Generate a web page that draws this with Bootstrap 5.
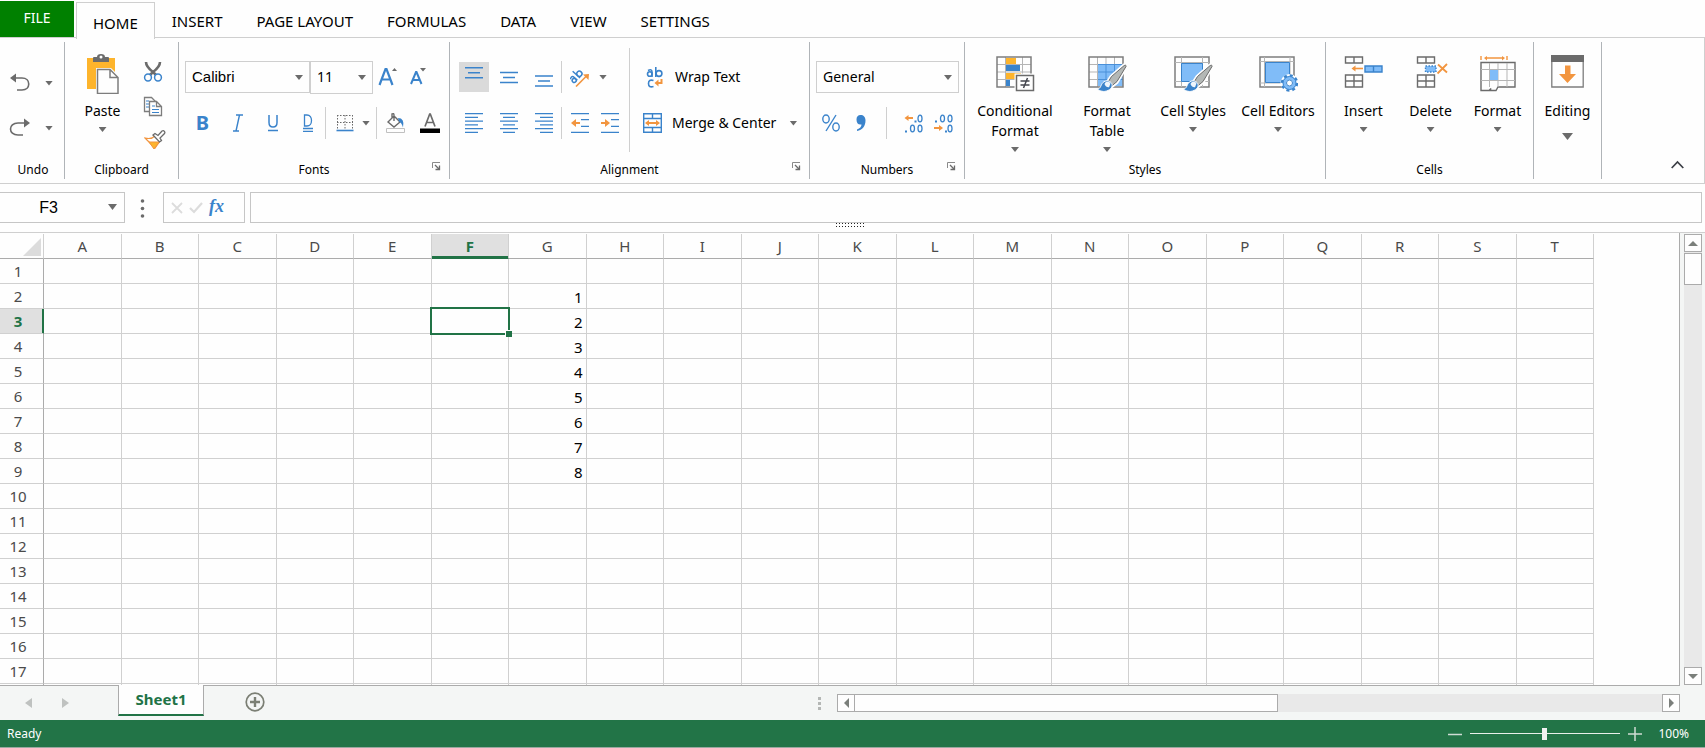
<!DOCTYPE html>
<html lang="en">
<head>
<meta charset="utf-8">
<meta name="viewport" content="width=device-width, initial-scale=1">
<title>Spreadsheet</title>
<link rel="stylesheet" href="https://cdn.jsdelivr.net/npm/bootstrap@5.3.0/dist/css/bootstrap.min.css">
<style>
:root{--ink:#6b6b6b;--blue:#3a83cb;--orange:#f2953f;--green:#217346;--line:#cfcfcf;--rule:#ababab}
body{font-family:"Noto Sans","Open Sans",sans-serif;font-size:14px;line-height:20px;color:#000;background:#fefefe}
button{background:none;border:0;padding:0;color:inherit}
svg{display:block;flex:none}
.caret{width:8px;height:5px;background:var(--ink);clip-path:polygon(0 0,100% 0,50% 100%)}

.tabs{height:38px;padding-top:1px;border-bottom:1px solid var(--line)}
.tabs .nav-link{padding:10px 17px 6px;color:#000;border:0;font-size:15px;white-space:nowrap}
.tabs .file-tab{width:74px;height:36px;padding:7px 0;margin-right:2px;background:#008000;color:#fff;font-size:14px;text-align:center}
.tabs .nav-link.active{height:37px;margin-bottom:-1px;padding:10px 16px 6px;margin-top:1px;border:1px solid var(--line);border-bottom:0;background:#fefefe}

.ribbon{display:grid;grid-template-columns:65px 114px 271px 360px 155px 361px 208px 68px 1fr;height:146px;padding:4px 0;border:1px solid var(--line);border-width:0 1px 1px 0}
.rgroup{display:grid;grid-template-rows:117px 20px;border-right:1px solid #b0b4b8;position:relative}
.rgroup footer{font-size:12px;text-align:center;line-height:22px}
.launcher{position:absolute;right:8px;bottom:8px}
.two-rows{display:grid;grid-template-rows:32px 32px;row-gap:14px;padding-top:19px;align-content:start}
.two-rows>div{display:flex;align-items:center}
.indent{padding-left:6px}
.tool{width:30px;height:30px;display:flex;align-items:center;justify-content:center;flex:none;white-space:nowrap}
.tool.on{background:#dadada}
.tool.letter{width:35px;color:var(--blue);font-size:20px;line-height:24px}
.drop{width:12px;height:30px;display:flex;align-items:center;justify-content:center;flex:none}
.vsep{width:1px;height:32px;background:var(--line);flex:none}
.vsep.tall{height:104px;margin-top:6px}
.number-sep{margin:0 11px 0 10px}
.align-tools{width:179px;padding-left:9px}
.align-tools .tool{margin-right:5px}
.align-tools .vsep{margin:0 3px 0 -3px}
.align-tools .vsep+.tool{margin-right:0}
.align-tools .drop{margin-left:2px}
.history{padding:26px 0 0 8px;display:grid;grid-template-columns:24px 34px;grid-auto-rows:30px;row-gap:15px;align-content:start}
.history button{display:flex;align-items:center;justify-content:center}
.big{display:flex;flex-direction:column;align-items:center;padding-top:12px;line-height:20px}
.big svg{height:40px;margin-bottom:7px}
.big .caret{margin-top:6px}
.big .editing-caret{width:11px;height:7px;margin-top:12px}
.clip{display:grid;grid-template-columns:75px 24px}
.clip .small-tools{display:grid;grid-auto-rows:26px;row-gap:8px;padding-top:17px;align-content:start}
.small-tools button{display:flex;align-items:center;justify-content:center}
.combo.form-select{height:32px;border:1px solid var(--line);border-radius:0;padding:0 20px 0 6px;font-size:14px;line-height:20px;color:#000;background-color:#fefefe;background-position:right 6px center;background-size:8px 5px;
--bs-form-select-bg-img:url("data:image/svg+xml,%3csvg xmlns='http://www.w3.org/2000/svg' viewBox='0 0 8 5'%3e%3cpath fill='%236b6b6b' d='M0 0h8L4 5z'/%3e%3c/svg%3e")}
.combo.font-name{width:125px;font-family:"Liberation Sans",sans-serif;font-size:15px}
.combo.font-size{width:63px;height:33px}
.combo.number-format{width:143px}
.wide-tool{display:flex;align-items:center;height:30px;white-space:nowrap}
.merge-caret{margin-left:13px}
.styles-row{display:grid;grid-template-columns:100px 84px 88px 82px}
.cells-row{display:grid;grid-template-columns:repeat(3,67px);padding-left:4px}

.fbar{height:49px;padding:8px 3px 10px 0;border-bottom:1px solid var(--line);position:relative}
.fbar .box{height:31px;border:1px solid #c6c6c6;border-radius:0;background:#fefefe}
.name-wrap{position:relative}
.name-wrap button{position:absolute;right:8px;top:12px}
.name-wrap .caret{width:9px;height:6px}
.fbar .name-box{width:125px;border-left:0;padding:0 27px 0 0;text-align:center;font-family:"Liberation Sans",sans-serif;font-size:16px}
.dots{margin:0 18px 0 15px}
.fx-box{width:82px;margin-right:5px;padding-left:7px;gap:6px}
.fx{font:italic 700 18px/20px "Liberation Serif",serif;color:var(--blue);padding-bottom:4px}
.grip{position:absolute;bottom:5px;left:49%;width:30px;height:5px;background:radial-gradient(circle,#222 1px,transparent 1px) 0 0/3px 3px}

.workarea{flex:1 1 0;min-height:0}
.pane{border-right:1px solid var(--rule);border-bottom:1px solid var(--rule);padding:1px 85px 0 0}
.sheet{width:100%;table-layout:fixed;border-collapse:separate;border-spacing:0;font-size:15px;line-height:20px}
.sheet th,.sheet td{height:25px;padding:0;border:solid #d0d0d0;border-width:0 1px 1px 0;position:relative}
.sheet th{font-weight:400;color:#4a4a4a;text-align:center;font-size:15px}
.sheet col.heads{width:44px}
.sheet thead th{border-bottom-color:var(--rule)}
.sheet tbody th{border-right-color:var(--rule);padding-right:7px}
.sheet .hot{background:#e0e0e0;color:var(--green);font-weight:700}
.sheet thead .hot{box-shadow:inset 0 -2px var(--green);border-bottom-color:var(--green)}
.sheet tbody .hot{box-shadow:inset -1px 0 var(--green);border-right-color:var(--green)}
.sheet td{text-align:right;padding:2px 3px 0 0}
.corner{position:absolute;right:2px;bottom:2px;width:18px;height:18px;background:#dcdcdc;clip-path:polygon(100% 0,100% 100%,0 100%)}
.cursor{position:absolute;inset:-2px;border:2px solid var(--green);z-index:1}
.cursor::after{content:"";position:absolute;right:-4px;bottom:-4px;width:7px;height:7px;background:var(--green);border:solid #fefefe;border-width:1px 0 0 1px}

.sb-btn{width:18px;height:18px;border:1px solid var(--rule);background:#fefefe;display:flex;align-items:center;justify-content:center;flex:none}
.thumb{border:1px solid var(--rule);background:#fefefe}
.vscroll{width:25px;padding:1px 3px 1px 4px;background:#f4f6f5}
.vscroll .track{background:#e9e9e9;padding-top:1px}
.vscroll .thumb{height:32px}
.bottom{height:34px;background:#f4f6f5}
.hscroll{width:843px;margin:8px 25px 0 0}
.hscroll .track{background:#e9e9e9;height:18px}
.hscroll .thumb{height:18px;width:calc(52% + 4px);margin-left:-1px}
.hdots{padding:11px 16px 0 0}
.sheet-nav{width:118px;padding-left:25px}
.sheet-nav button{width:37px;height:34px;display:flex;align-items:center}
.sheet-tab{position:relative;width:86px;height:31px;margin-top:-1px;border:1px solid var(--rule);border-top:0;border-bottom:2px solid var(--green);background:#fefefe;color:var(--green);font-weight:700;font-size:15px;text-align:center;text-decoration:none;line-height:28px}
.add-sheet{margin:6px 0 0 41px}
.status{height:28px;background:#227447;color:#fff;font-size:12px;border-bottom:1px solid #9aa8a0}
.status>span:first-child{padding-left:7px}
.zoom{appearance:none;width:150px;height:14px;background:linear-gradient(#e8f0eb,#e8f0eb) center/100% 1px no-repeat;margin:0 8px}
.zoom::-webkit-slider-thumb{appearance:none;width:5px;height:12px;background:#f0f2f1}
</style>
</head>
<body>
<div class="d-flex flex-column vh-100 overflow-hidden">

<nav class="tabs d-flex flex-shrink-0" aria-label="Ribbon">
  <a class="nav-link file-tab" href="#">FILE</a>
  <a class="nav-link active" href="#">HOME</a>
  <a class="nav-link" href="#">INSERT</a>
  <a class="nav-link" href="#">PAGE LAYOUT</a>
  <a class="nav-link" href="#">FORMULAS</a>
  <a class="nav-link" href="#">DATA</a>
  <a class="nav-link" href="#">VIEW</a>
  <a class="nav-link" href="#">SETTINGS</a>
</nav>

<!-- shared icon parts -->
<svg width="0" height="0" class="position-absolute" aria-hidden="true">
  <defs>
    <g id="launch" fill="none" stroke="#8a8a8a"><path d="M.5 6V.5H8"/><path d="M3 3l4 4M7.500 3.500v4h-4" stroke="#6b6b6b" stroke-width="1.300"/></g>
    <g id="brush"><path d="M38.500 12.500c.5-1.500-1-2.500-2.500-1.500L23 22.500 18 30l4 4 7-5.500z" fill="#b4b8b6" stroke="#fefefe" stroke-width="3"/><path d="M38 12.500c.5-1.500-1-1.500-2-.8L23.500 22.500 19.500 29l3.500 3.500 6-5z" fill="#b4b8b6" stroke="#6b6b6b"/><path d="M9 35c4 0 3.500-4 6-6.500 2.500-2.500 6-2 8 0s1.500 6-3 8-8 .5-11-1.500z" fill="#3a83cb" stroke="#fefefe"/><path d="M16.500 30c1-3 4.500-2.500 6-.8l-1.500 4c-2 .3-3.500-.8-4.500-3.200z" fill="#eef5fc"/></g>
  </defs>
</svg>

<main class="ribbon flex-shrink-0">
  <section class="rgroup">
    <div class="history">
      <button aria-label="Undo"><svg width="22" height="20" viewBox="0 0 22 20" fill="none" stroke="#6b6b6b" stroke-width="1.600"><path d="M5 5h8c9 0 9 12 0 12H8"/><path d="M7 .5v9L1 5z" fill="#6b6b6b" stroke="none"/></svg></button>
      <button aria-label="Undo list"><span class="caret"></span></button>
      <button aria-label="Redo"><svg width="22" height="20" viewBox="0 0 22 20" fill="none" stroke="#6b6b6b" stroke-width="1.600"><path d="M17 5H9C-1 5-1 17 9 17h5"/><path d="M15 .5v9L21 5z" fill="#6b6b6b" stroke="none"/></svg></button>
      <button aria-label="Redo list"><span class="caret"></span></button>
    </div>
    <footer>Undo</footer>
  </section>

  <section class="rgroup">
    <div class="clip">
      <button class="big">
        <svg width="32" height="40" viewBox="0 0 32 40"><path d="M0 4h28v31H0z" fill="#fdb42c"/><path d="M6 8V4q0-1 1-1h3q0-3 4-3t4 3h3q1 0 1 1v4z" fill="#6b6b6b"/><circle cx="14" cy="3" r="1.500" fill="#fefefe"/><path d="M9 14h15l8 8v18H9z" fill="#fefefe"/><path d="M10.500 15.500H23l8 8v16H10.500zM23 15.500v8h8" fill="#fefefe" stroke="#7d7d7d" stroke-width="1.500"/></svg>
        Paste<span class="caret"></span>
      </button>
      <div class="small-tools">
        <button aria-label="Cut"><svg width="20" height="20" viewBox="0 0 20 20"><path d="M3 0c0 4 3 7 7 10l3 3M17 0c0 4-3 7-7 10l-3 3" fill="none" stroke="#6b6b6b" stroke-width="2.600"/><circle cx="5" cy="15.500" r="3.400" fill="#fefefe" stroke="#3a83cb" stroke-width="1.500"/><circle cx="15" cy="15.500" r="3.400" fill="#fefefe" stroke="#3a83cb" stroke-width="1.500"/></svg></button>
        <button aria-label="Copy"><svg width="20" height="21" viewBox="0 0 20 21" fill="#fefefe" stroke="#7d7d7d"><path d="M1.500 1.500h7l4 4v10h-11z" stroke-width="1.300"/><path d="M3 5h3M3 8h3M3 11h3" stroke="#3a83cb"/><path d="M6.500 5.500h7l5 5v9h-12zM13.500 5.500v5h5" stroke-width="1.300"/><path d="M9 13.500h7M9 16.500h7M9 10h3" stroke="#3a83cb"/></svg></button>
        <button aria-label="Format painter" class="ps-1"><svg width="22" height="20" viewBox="0 0 22 20"><path d="M1 8l10 10 5-7-5-5c-3 3-6 3-10 2z" fill="#fefefe" stroke="#f2953f" stroke-width="1.200"/><path d="M5 12h10l-5 7z" fill="#fdb42c" stroke="#f2953f"/><path d="M9 5l2-1.500 3 2 4-4.500c2-1 3.500 1 2.500 2.500L16 8l1.500 2.500-2 1.500z" fill="#fefefe" stroke="#6b6b6b" stroke-width="1.300"/></svg></button>
      </div>
    </div>
    <footer>Clipboard</footer>
  </section>

  <section class="rgroup">
    <div class="two-rows indent">
      <div>
        <select class="form-select combo font-name" aria-label="Font"><option>Calibri</option></select>
        <select class="form-select combo font-size" aria-label="Font size"><option>11</option></select>
        <button class="tool" aria-label="Grow font"><svg width="20" height="20" viewBox="0 0 20 20"><path d="M1.500 18L7.500 2h1l6 16M4 12.500h8" fill="none" stroke="#3a83cb" stroke-width="2.200"/><path d="M14 4h5l-2.500-3z" fill="#6b6b6b"/></svg></button>
        <button class="tool" aria-label="Shrink font"><svg width="18" height="20" viewBox="0 0 18 20"><path d="M2 17L7 5h.5l5 12M4 13h6.500" fill="none" stroke="#3a83cb" stroke-width="2"/><path d="M11 1h6l-3 3.500z" fill="#6b6b6b"/></svg></button>
      </div>
      <div>
        <button class="tool letter fw-bold" aria-label="Bold">B</button>
        <button class="tool letter" aria-label="Italic"><svg width="12" height="18" viewBox="0 0 12 18"><path d="M4 1h7M1 17h6M7.500 1l-3.500 16" fill="none" stroke="#3a83cb" stroke-width="1.400"/></svg></button>
        <button class="tool letter" aria-label="Underline"><svg width="12" height="18" viewBox="0 0 12 18"><path d="M2 1v7.500c0 6 8 6 8 0V1M1 16.500h10" fill="none" stroke="#3a83cb" stroke-width="1.500"/></svg></button>
        <button class="tool letter" aria-label="Double underline"><svg width="12" height="18" viewBox="0 0 12 18"><path d="M2.500 1v11H5c6 0 6-11 0-11zM1 14.500h10M1 17.300h10" fill="none" stroke="#3a83cb" stroke-width="1.300"/></svg></button>
        <span class="vsep"></span>
        <button class="tool ms-1" aria-label="Borders"><svg width="18" height="18" viewBox="0 0 18 18" fill="none" stroke="#6b6b6b"><path d="M1 1.500h16M1 8.500h16M1.500 1v14M9 1v14M16.500 1v14" stroke-dasharray="1.500 1.500"/><path d="M.5 16.500h17" stroke="#3a83cb" stroke-width="1.600"/></svg></button>
        <button class="drop" aria-label="Border styles"><span class="caret"></span></button>
        <span class="vsep ms-1"></span>
        <button class="tool ms-1" aria-label="Fill colour"><svg width="22" height="20" viewBox="0 0 22 20"><path d="M3 9l6-6 6 6-6 5zM9 8V2q0-2-2-1v5" fill="#fefefe" stroke="#6b6b6b" stroke-width="1.400"/><path d="M13 5q7 0 5 9.500-1.500-5-4-6z" fill="#3a83cb"/><path d="M1.500 15.500h18v4h-18z" fill="#fefefe" stroke="#c0c0c0"/></svg></button>
        <button class="tool ms-1" aria-label="Font colour"><svg width="20" height="20" viewBox="0 0 20 20"><path d="M5 13.500L9.700 1h.6L15 13.500M6.500 9.500h7" fill="none" stroke="#6b6b6b" stroke-width="1.700"/><path d="M0 15.500h20V20H0z"/></svg></button>
      </div>
    </div>
    <footer>Fonts</footer>
    <button class="launcher" aria-label="Font settings"><svg width="9" height="9"><use href="#launch"/></svg></button>
  </section>

  <section class="rgroup">
    <div class="d-flex">
      <div class="two-rows align-tools">
        <div>
          <button class="tool on" aria-label="Top align"><svg width="18" height="20" viewBox="0 0 18 20" stroke="#3a83cb" stroke-width="1.400"><path d="M0 .8h18M3 5.800h12M0 10.800h18"/></svg></button>
          <button class="tool" aria-label="Middle align"><svg width="18" height="20" viewBox="0 0 18 20" stroke="#3a83cb" stroke-width="1.400"><path d="M0 5.500h18M3 10.500h12M0 15.500h18"/></svg></button>
          <button class="tool" aria-label="Bottom align"><svg width="18" height="20" viewBox="0 0 18 20" stroke="#3a83cb" stroke-width="1.400"><path d="M0 9h18M3 14h12M0 19h18"/></svg></button>
          <span class="vsep"></span>
          <button class="tool" aria-label="Orientation"><svg width="20" height="20" viewBox="0 0 20 20"><g fill="none" stroke="#3a83cb" stroke-width="1.500" transform="rotate(-48 6 14)"><path d="M3.500 8.500q4-1.500 4 1.500v4.500"/><circle cx="5.200" cy="12.300" r="2"/><path d="M11 5v10"/><circle cx="13.600" cy="11.700" r="2.600"/></g><path d="M6 19.500L16.500 9" stroke="#f2953f" stroke-width="1.600"/><path d="M13 7.500l6-.5-.5 6z" fill="#f2953f"/></svg></button>
          <button class="drop" aria-label="Orientation list"><span class="caret"></span></button>
        </div>
        <div>
          <button class="tool" aria-label="Align left"><svg width="18" height="20" viewBox="0 0 18 20" stroke="#3a83cb" stroke-width="1.300"><path d="M0 .7h18M0 4.400h13M0 8.100h18M0 11.900h13M0 15.600h18M0 19.300h13"/></svg></button>
          <button class="tool" aria-label="Align centre"><svg width="18" height="20" viewBox="0 0 18 20" stroke="#3a83cb" stroke-width="1.300"><path d="M0 .7h18M3 4.400h12M0 8.100h18M3 11.900h12M0 15.600h18M3 19.300h12"/></svg></button>
          <button class="tool" aria-label="Align right"><svg width="18" height="20" viewBox="0 0 18 20" stroke="#3a83cb" stroke-width="1.300"><path d="M0 .7h18M5 4.400h13M0 8.100h18M5 11.900h13M0 15.600h18M5 19.300h13"/></svg></button>
          <span class="vsep"></span>
          <button class="tool" aria-label="Decrease indent"><svg width="18" height="20" viewBox="0 0 18 20" stroke="#3a83cb" stroke-width="1.300"><path d="M0 .7h18M10 6.700h8M10 13.300h8M0 19.300h18"/><path d="M3 10h6" stroke="#f2953f" stroke-width="2"/><path d="M5 6v8l-5-4z" fill="#f2953f" stroke="none"/></svg></button>
          <button class="tool" aria-label="Increase indent"><svg width="18" height="20" viewBox="0 0 18 20" stroke="#3a83cb" stroke-width="1.300"><path d="M0 .7h18M10 6.700h8M10 13.300h8M0 19.300h18"/><path d="M0 10h6" stroke="#f2953f" stroke-width="2"/><path d="M4 6v8l5-4z" fill="#f2953f" stroke="none"/></svg></button>
        </div>
      </div>
      <span class="vsep tall"></span>
      <div class="two-rows ms-2 ps-1">
        <div>
          <button class="wide-tool gap-2"><svg width="25" height="22" viewBox="-2 0 25 22"><g fill="none" stroke="#3a83cb" stroke-width="1.600"><path d="M4 4.500q4-2 4 1.500v5"/><circle cx="5.800" cy="8" r="2.300"/><path d="M11.800 1v10"/><circle cx="15" cy="7.500" r="2.900"/><path d="M9.500 14.500q-5-1.500-5 3t5 3"/></g><path d="M17.500 13v4H14" fill="none" stroke="#f2953f" stroke-width="2"/><path d="M14.500 13.500v7l-4-3.500z" fill="#f2953f"/></svg>Wrap Text</button>
        </div>
        <div>
          <button class="wide-tool"><svg class="me-1" width="26" height="20" viewBox="0 0 26 20"><path d="M1.700.7h17.600v18.600H1.700zM1.700 5.500h17.600M1.700 14.500h17.600M10.500.7v4.800M10.500 14.500v4.800" fill="#fefefe" stroke="#3a83cb" stroke-width="1.400"/><path d="M5 10h11" stroke="#f2953f" stroke-width="2"/><path d="M7 7v6l-4-3zM14 7v6l4-3z" fill="#f2953f"/></svg>Merge &amp; Center<span class="caret merge-caret"></span></button>
        </div>
      </div>
    </div>
    <footer>Alignment</footer>
    <button class="launcher" aria-label="Alignment settings"><svg width="9" height="9"><use href="#launch"/></svg></button>
  </section>

  <section class="rgroup">
    <div class="two-rows indent">
      <div><select class="form-select combo number-format" aria-label="Number format"><option>General</option></select></div>
      <div>
        <button class="tool" aria-label="Percent"><svg width="18" height="18" viewBox="0 0 18 18" fill="none" stroke="#3a83cb" stroke-width="1.400"><ellipse cx="4" cy="5" rx="3.200" ry="4"/><ellipse cx="14" cy="13" rx="3.200" ry="4"/><path d="M14 1L4 17"/></svg></button>
        <button class="tool" aria-label="Thousands separator"><svg width="10" height="18" viewBox="0 0 10 18"><path d="M4.500 1c3 0 5 2 5 5.500 0 5.500-3 9.500-8.500 10.500v-1.500c3-1 4.500-3 4.500-5C2 11 .5 9 .5 5.500.5 2.500 2 1 4.500 1z" fill="#3a83cb"/></svg></button>
        <span class="vsep number-sep"></span>
        <button class="tool" aria-label="Increase decimal"><svg width="19" height="19" viewBox="0 0 19 19" fill="none" stroke="#3a83cb" stroke-width="1.300"><ellipse cx="16" cy="4.500" rx="2" ry="3.300"/><ellipse cx="8.500" cy="14.500" rx="2" ry="3.300"/><ellipse cx="16" cy="14.500" rx="2" ry="3.300"/><path d="M10.500 7.500h2M1 17.500h2" stroke-width="2"/><path d="M3 4h6" stroke="#f2953f" stroke-width="2"/><path d="M4.500 1v6L.5 4z" fill="#f2953f" stroke="none"/></svg></button>
        <button class="tool" aria-label="Decrease decimal"><svg width="19" height="19" viewBox="0 0 19 19" fill="none" stroke="#3a83cb" stroke-width="1.300"><ellipse cx="8.500" cy="4.500" rx="2" ry="3.300"/><ellipse cx="16" cy="4.500" rx="2" ry="3.300"/><ellipse cx="16" cy="14.500" rx="2" ry="3.300"/><path d="M11 17.500h2M1 7.500h2" stroke-width="2"/><path d="M0 14h6" stroke="#f2953f" stroke-width="2"/><path d="M5 11v6l4-3z" fill="#f2953f" stroke="none"/></svg></button>
      </div>
    </div>
    <footer>Numbers</footer>
    <button class="launcher" aria-label="Number settings"><svg width="9" height="9"><use href="#launch"/></svg></button>
  </section>

  <section class="rgroup">
    <div class="styles-row">
      <button class="big"><svg width="39" height="40" viewBox="0 0 39 40"><path d="M1 3h34v30H1z" fill="#fefefe"/><path d="M9.500 3v30M26.500 3v30M1 10.500h34M1 18h34M1 25.500h34" stroke="#b5b5b5"/><path d="M10 4h10v6H10zM10 19h15v6H10z" fill="#fdb42c"/><path d="M10 11h14v6H10zM10 26h4v6h-4z" fill="#3a83cb"/><path d="M1 3h34v30H1z" fill="none" stroke="#7d7d7d" stroke-width="1.500"/><path d="M18.500 19.500H40v18H18.500z" fill="#fefefe"/><path d="M20.500 21.500h17v15h-17z" fill="#fefefe" stroke="#6b6b6b" stroke-width="1.500"/><path d="M24.500 27h9M24.500 31h9M31.500 24l-4 10" stroke="#44464e" stroke-width="1.500"/></svg>Conditional<br>Format<span class="caret"></span></button>
      <button class="big"><svg width="39" height="40" viewBox="0 0 39 40"><path d="M1 3h34v30H1z" fill="#fefefe"/><path d="M10 11h25v21H10z" fill="#80bcf8"/><path d="M9.500 3v8M18 3v8M26.500 3v8M1 10.500h9M1 18h9M1 25.500h9M9.500 11v22" stroke="#b5b5b5"/><path d="M18 11v21M26.500 11v21M10 18h25M10 25.500h25M10 10.500h25" stroke="#4a90d9"/><path d="M1 3h34v30H1z" fill="none" stroke="#7d7d7d" stroke-width="1.500"/><use href="#brush"/></svg>Format<br>Table<span class="caret"></span></button>
      <button class="big"><svg width="39" height="40" viewBox="0 0 39 40"><path d="M1 3h34v30H1z" fill="#fefefe" stroke="#7d7d7d" stroke-width="1.500"/><path d="M7.500 3v30M28.500 3v30M1 8.500h34M1 27.500h34" stroke="#b5b5b5"/><path d="M7.500 9.500h21v18h-21z" fill="#80bcf8" stroke="#3a83cb"/><use href="#brush"/></svg>Cell Styles<span class="caret"></span></button>
      <button class="big"><svg width="39" height="40" viewBox="0 0 39 40"><path d="M1 3h34v30H1z" fill="#fefefe" stroke="#7d7d7d" stroke-width="1.500"/><path d="M5.500 3v30M31 3v30M1 7.500h34M1 29h34" stroke="#b5b5b5"/><path d="M6.500 8.500h24v20h-24z" fill="#80bcf8" stroke="#3a83cb"/><circle cx="30.500" cy="29" r="9" fill="#fefefe"/><circle cx="30.500" cy="29" r="7.500" fill="none" stroke="#3a83cb" stroke-width="2.500" stroke-dasharray="3 2.890"/><circle cx="30.500" cy="29" r="5" fill="none" stroke="#80bcf8" stroke-width="3.500"/><circle cx="30.500" cy="29" r="6.500" fill="none" stroke="#3a83cb"/><circle cx="30.500" cy="29" r="3" fill="#fefefe" stroke="#3a83cb"/></svg>Cell Editors<span class="caret"></span></button>
    </div>
    <footer>Styles</footer>
  </section>

  <section class="rgroup">
    <div class="cells-row">
      <button class="big"><svg width="39" height="40" viewBox="0 0 39 40" fill="#fefefe" stroke="#6b6b6b" stroke-width="1.400"><path d="M1.500 3h17v6h-17zM10 3v6M1.500 21h17v12h-17zM1.500 27h17M10 21v12"/><path d="M21 12h17v6H21zM29.500 12v6" fill="#80bcf8" stroke="#3a83cb"/><path d="M9 14.500h10" stroke="#f2953f" stroke-width="1.600"/><path d="M11.500 11.500v6l-4-3z" fill="#f2953f" stroke="none"/></svg>Insert<span class="caret"></span></button>
      <button class="big"><svg width="34" height="40" viewBox="0 0 34 40" fill="#fefefe" stroke="#6b6b6b" stroke-width="1.400"><path d="M3.500 3h17v6h-17zM12 3v6M3.500 21h17v12h-17zM3.500 27h17M12 21v12"/><path d="M11.500 12H22v6H11.500z" fill="#80bcf8" stroke="#3a83cb" stroke-dasharray="1.500 1.500"/><path d="M24 10.500l9 8M33 10l-9.500 9.500" stroke="#f2953f" stroke-width="1.800"/></svg>Delete<span class="caret"></span></button>
      <button class="big"><svg width="36" height="40" viewBox="0 0 36 40" fill="#fefefe" stroke="#6b6b6b" stroke-width="1.400"><path d="M1 8.500h34v24.500H18l-2 3.500h-6l1-2-2 2H1z"/><path d="M9.500 9v24M18 9v24M27 9v24M1 15.500h34M1 26.500h34" stroke="#b5b5b5" stroke-width="1"/><path d="M10 16h8v10h-8z" fill="#80bcf8" stroke="none"/><path d="M1 2v4M27 2v4M6 4h17" stroke="#f2953f"/><path d="M7 2v4.500L4 4zM22 2v4.500L25 4z" fill="#f2953f" stroke="none"/></svg>Format<span class="caret"></span></button>
    </div>
    <footer>Cells</footer>
  </section>

  <section class="rgroup">
    <button class="big"><svg width="33" height="40" viewBox="0 0 33 40"><path d="M.8 2h31.400v31H.8z" fill="#fefefe" stroke="#7d7d7d" stroke-width="1.300"/><path d="M0 1h33v7H0z" fill="#6b6b6b"/><path d="M14 11.500h5.500V20H25l-8.500 9L8 20h6z" fill="#f2953f"/></svg>Editing<span class="caret editing-caret"></span></button>
  </section>
  <div class="d-flex align-items-end justify-content-end pe-3">
    <button class="mb-2 me-1" aria-label="Collapse ribbon"><svg width="13" height="13" viewBox="0 0 13 13" fill="none" stroke="#3c3f46" stroke-width="1.700"><path d="M.7 10l5.800-6 5.800 6"/></svg></button>
  </div>
</main>

<div class="fbar d-flex align-items-start flex-shrink-0">
  <div class="name-wrap"><input class="box name-box" aria-label="Name box" value="F3"><button aria-label="Name list"><span class="caret d-block"></span></button></div>
  <svg class="dots" width="5" height="31" viewBox="0 0 5 31" fill="#6b6b6b"><circle cx="2.500" cy="9" r="1.800"/><circle cx="2.500" cy="16.500" r="1.800"/><circle cx="2.500" cy="24" r="1.800"/></svg>
  <div class="box fx-box d-flex align-items-center">
    <button aria-label="Cancel"><svg width="12" height="12" viewBox="0 0 12 12" stroke="#dcdcdc" stroke-width="1.800"><path d="M1 1l10 10M11 1L1 11"/></svg></button>
    <button aria-label="Enter"><svg width="14" height="12" viewBox="0 0 14 12" stroke="#dcdcdc" stroke-width="2.200" fill="none"><path d="M1 6l4 4 8-9"/></svg></button>
    <button class="fx" aria-label="Insert function">fx</button>
  </div>
  <input class="box flex-grow-1 px-2" aria-label="Formula">
  <span class="grip"></span>
</div>

<div class="workarea d-flex overflow-hidden">
  <div class="pane flex-grow-1 overflow-hidden">
    <table class="sheet" id="sheet"><colgroup><col class="heads"></colgroup><thead></thead><tbody></tbody></table>
  </div>
  <div class="vscroll d-flex flex-column">
    <button class="sb-btn" aria-label="Scroll up"><svg width="10" height="5"><path d="M0 5h10L5 0z" fill="#7b7f7b"/></svg></button>
    <div class="track flex-grow-1"><div class="thumb"></div></div>
    <button class="sb-btn" aria-label="Scroll down"><svg width="10" height="5"><path d="M0 0h10L5 5z" fill="#7b7f7b"/></svg></button>
  </div>
</div>

<div class="bottom d-flex align-items-start flex-shrink-0">
  <div class="sheet-nav d-flex">
    <button aria-label="Previous sheet"><svg width="7" height="10"><path d="M7 0v10L0 5z" fill="#bfc2c0"/></svg></button>
    <button aria-label="Next sheet"><svg width="7" height="10"><path d="M0 0v10l7-5z" fill="#bfc2c0"/></svg></button>
  </div>
  <a class="sheet-tab" href="#">Sheet1</a>
  <button class="add-sheet" aria-label="Add sheet"><svg width="20" height="20" viewBox="0 0 20 20" fill="none" stroke="#7b7f74"><circle cx="10" cy="10" r="8.800" stroke-width="1.700"/><path d="M10 5v10M5 10h10" stroke-width="2.400"/></svg></button>
  <div class="hdots ms-auto"><svg width="3" height="13" fill="#b4b7b5"><path d="M0 0h3v3H0zM0 5h3v3H0zM0 10h3v3H0z"/></svg></div>
  <div class="hscroll d-flex">
    <button class="sb-btn" aria-label="Scroll left"><svg width="5" height="10"><path d="M5 0v10L0 5z" fill="#7b7f7b"/></svg></button>
    <div class="track flex-grow-1"><div class="thumb"></div></div>
    <button class="sb-btn" aria-label="Scroll right"><svg width="5" height="10"><path d="M0 0v10l5-5z" fill="#7b7f7b"/></svg></button>
  </div>
</div>

<footer class="status d-flex align-items-center flex-shrink-0">
  <span>Ready</span>
  <button class="ms-auto" aria-label="Zoom out"><svg width="14" height="14" stroke="#cfdcd4" stroke-width="1.500"><path d="M0 7.500h14"/></svg></button>
  <input class="zoom" type="range" aria-label="Zoom" min="0" max="200" value="99">
  <button aria-label="Zoom in"><svg width="14" height="14" stroke="#cfdcd4" stroke-width="1.500"><path d="M0 7h14M7 0v14"/></svg></button>
  <span class="ms-3 me-3">100%</span>
</footer>
</div>

<script src="https://cdn.jsdelivr.net/npm/bootstrap@5.3.0/dist/js/bootstrap.bundle.min.js"></script>
<script>
const columns = "ABCDEFGHIJKLMNOPQRST".split("");
const active = {col: "F", row: 3};
const values = {};
for (let i = 1; i <= 8; i++) values["G" + (i + 1)] = i;

const sheet = document.getElementById("sheet");
sheet.tHead.innerHTML = "<tr><th><span class='corner'></span></th>" +
  columns.map(c => `<th scope="col" class="${c === active.col ? "hot" : ""}">${c}</th>`).join("") + "</tr>";
let rows = "";
for (let r = 1; r <= 17; r++) {
  rows += `<tr><th scope="row" class="${r === active.row ? "hot" : ""}">${r}</th>` +
    columns.map(c => `<td>${c === active.col && r === active.row ? "<span class='cursor'></span>" : values[c + r] || ""}</td>`).join("") + "</tr>";
}
// an empty row runs under the pane's lower edge
rows += "<tr><th></th>" + "<td></td>".repeat(columns.length) + "</tr>";
sheet.tBodies[0].innerHTML = rows;
</script>
</body>
</html>
